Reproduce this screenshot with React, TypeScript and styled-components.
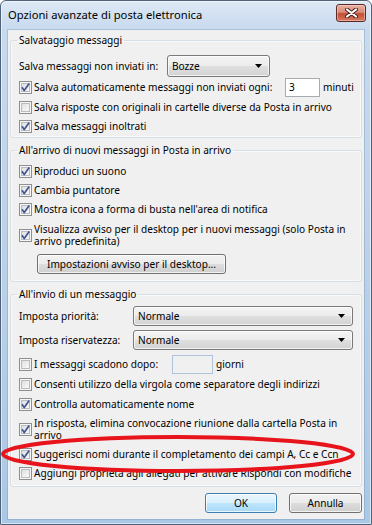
import React from 'react';
import styled, { createGlobalStyle } from 'styled-components';

const GlobalStyle = createGlobalStyle`
  html, body {
    margin: 0;
    padding: 0;
    background: #ffffff;
  }
  body {
    font-family: "Noto Sans", "Open Sans", sans-serif;
    font-size: 10.1px;
    color: #000;
  }
`;

function CheckMark() {
  return (
    <svg width="11" height="11" viewBox="0 0 11 11" style={{ display: 'block' }}>
      <path d="M2 5.3 L4.2 8.6 L9.2 1.6" fill="none" stroke="#3f558f" strokeWidth="1.7" strokeLinejoin="round" />
    </svg>
  );
}

function Check({ checked, w, children }: { checked?: boolean; w?: number; children: React.ReactNode }) {
  return (
    <CheckLabel $w={w}>
      <Box>{checked && <CheckMark />}</Box>
      <CheckText>{children}</CheckText>
    </CheckLabel>
  );
}

function Combo({ w, h, value }: { w?: number; h: number; value: string }) {
  return (
    <Select $w={w} $h={h}>
      <span>{value}</span>
      <svg width="7" height="4" viewBox="0 0 7 4">
        <path d="M0 0 H7 L3.5 4 Z" fill="#000" />
      </svg>
    </Select>
  );
}

export default function App() {
  return (
    <>
      <GlobalStyle />
      <Window>
        <TitleBar>
          <Title>Opzioni avanzate di posta elettronica</Title>
          <CloseButton>
            <svg width="13" height="10" viewBox="0 0 13 10">
              <path d="M2 1.5 L11 8.5 M11 1.5 L2 8.5" stroke="#4a1c16" strokeWidth="4" strokeLinecap="round" />
              <path d="M2 1.5 L11 8.5 M11 1.5 L2 8.5" stroke="#ffffff" strokeWidth="2.2" strokeLinecap="round" />
            </svg>
          </CloseButton>
        </TitleBar>

        <Content>
          <Group $mt={3} $pt={8} $pb={1}>
            <Legend>Salvataggio messaggi</Legend>
            <Row $h={22}>
              <FieldLabel $w={148}>Salva messaggi non inviati in:</FieldLabel>
              <Combo w={103} h={22} value="Bozze" />
            </Row>
            <Row $h={20}>
              <Check checked w={266}>Salva automaticamente messaggi non inviati ogni:</Check>
              <Field $w={35}>3</Field>
              <After>minuti</After>
            </Row>
            <Row $h={20}>
              <Check>Salva risposte con originali in cartelle diverse da Posta in arrivo</Check>
            </Row>
            <Row $h={19}>
              <Check checked>Salva messaggi inoltrati</Check>
            </Row>
          </Group>

          <Group $mt={5} $pt={5} $pb={7}>
            <Legend>All'arrivo di nuovi messaggi in Posta in arrivo</Legend>
            <Row $h={19}>
              <Check checked>Riproduci un suono</Check>
            </Row>
            <Row $h={19}>
              <Check checked>Cambia puntatore</Check>
            </Row>
            <Row $h={19}>
              <Check checked>Mostra icona a forma di busta nell'area di notifica</Check>
            </Row>
            <Row $h={26} $mt={3}>
              <Check checked>
                Visualizza avviso per il desktop per i nuovi messaggi (solo Posta in
                <br />
                arrivo predefinita)
              </Check>
            </Row>
            <Row $h={20} $mt={6}>
              <PushButton $w={189} style={{ marginLeft: 18 }}>Impostazioni avviso per il desktop...</PushButton>
            </Row>
          </Group>

          <Group $mt={5} $pt={5} $pb={3}>
            <Legend>All'invio di un messaggio</Legend>
            <Row $h={20}>
              <FieldLabel $w={114}>Imposta priorità:</FieldLabel>
              <Combo w={220} h={20} value="Normale" />
            </Row>
            <Row $h={20} $mt={4}>
              <FieldLabel $w={114}>Imposta riservatezza:</FieldLabel>
              <Combo w={220} h={20} value="Normale" />
            </Row>
            <Row $h={20} $mt={4}>
              <Check w={153}>I messaggi scadono dopo:</Check>
              <Field $w={41} $disabled />
              <After>giorni</After>
            </Row>
            <Row $h={20}>
              <Check>Consenti utilizzo della virgola come separatore degli indirizzi</Check>
            </Row>
            <Row $h={20}>
              <Check checked>Controlla automaticamente nome</Check>
            </Row>
            <Row $h={26} $mt={2}>
              <Check checked>
                In risposta, elimina convocazione riunione dalla cartella Posta in
                <br />
                arrivo
              </Check>
            </Row>
            <Row $h={19} $mt={3}>
              <Check checked>Suggerisci nomi durante il completamento dei campi A, Cc e Ccn</Check>
            </Row>
            <Row $h={19}>
              <Check>Aggiungi proprietà agli allegati per attivare Rispondi con modifiche</Check>
            </Row>
          </Group>

          <Footer>
            <PushButton $w={72} $primary>OK</PushButton>
            <PushButton $w={73}>Annulla</PushButton>
          </Footer>
        </Content>

        <Marker width="372" height="525" viewBox="0 0 372 525">
          <ellipse cx="178" cy="454" rx="175" ry="17" fill="none" stroke="#e8141c" strokeWidth="4" />
        </Marker>
      </Window>
    </>
  );
}

const Window = styled.div`
  position: relative;
  box-sizing: border-box;
  width: 372px;
  height: 525px;
  display: flex;
  flex-direction: column;
  border: 1px solid #4f6279;
  border-radius: 6px 6px 0 0;
  background: linear-gradient(to bottom, #dde8f5 0px, #c8daee 28px, #bfd3ea 200px, #a9c8e6 100%);
  box-shadow: inset 0 0 0 1px rgba(255, 255, 255, 0.55);
  overflow: hidden;
`;

const TitleBar = styled.div`
  height: 29px;
  flex: none;
  display: flex;
  align-items: flex-start;
  justify-content: space-between;
  padding: 0 5px 0 7px;
`;

const Title = styled.div`
  font-size: 11.2px;
  line-height: 28px;
  color: #000;
  white-space: nowrap;
`;

const CloseButton = styled.div`
  box-sizing: border-box;
  margin-top: 3px;
  width: 30px;
  height: 18px;
  display: flex;
  align-items: center;
  justify-content: center;
  border: 1px solid #5a2a24;
  border-radius: 3px;
  background: linear-gradient(to bottom, #eab1a4 0%, #d98b78 45%, #c24e36 55%, #d77a5f 100%);
  box-shadow: inset 0 0 0 1px rgba(255, 220, 210, 0.5);
`;

const Content = styled.div`
  flex: 1;
  margin: 0 7px 5px 7px;
  padding: 0 2px;
  background: #f0f0f0;
  display: flex;
  flex-direction: column;
  box-shadow: 0 0 0 1px rgba(110, 140, 175, 0.35);
`;

const Group = styled.fieldset<{ $mt: number; $pt: number; $pb: number }>`
  margin: ${(p) => p.$mt}px 0 0 0;
  padding: ${(p) => p.$pt}px 8px ${(p) => p.$pb}px 8px;
  border: 1px solid #d5dfe5;
  border-radius: 3px;
  min-width: 0;
  box-shadow: inset 0 0 0 1px rgba(255, 255, 255, 0.6);
`;

const Legend = styled.legend`
  padding: 0 2px;
  margin-left: -2px;
  line-height: 14px;
`;

const Row = styled.div<{ $h: number; $mt?: number }>`
  display: flex;
  align-items: center;
  height: ${(p) => p.$h}px;
  margin-top: ${(p) => p.$mt ?? 0}px;
  white-space: nowrap;
`;

const FieldLabel = styled.span<{ $w: number }>`
  width: ${(p) => p.$w}px;
  flex: none;
`;

const CheckLabel = styled.label<{ $w?: number }>`
  display: flex;
  align-items: center;
  gap: 2px;
  width: ${(p) => (p.$w ? `${p.$w}px` : 'auto')};
  flex: none;
`;

const Box = styled.span`
  box-sizing: border-box;
  flex: none;
  width: 13px;
  height: 13px;
  border: 1px solid #8e8f8f;
  background: linear-gradient(135deg, #d6d7d9 0%, #f1f1f1 60%, #fbfbfb 100%);
  box-shadow: inset 0 0 0 1px #f6f6f6, inset 0 0 0 2px #b9bcc1;
`;

const CheckText = styled.span`
  line-height: 12.5px;
`;

const Select = styled.div<{ $w?: number; $h: number }>`
  box-sizing: border-box;
  width: ${(p) => p.$w}px;
  height: ${(p) => p.$h}px;
  flex: none;
  display: flex;
  align-items: center;
  justify-content: space-between;
  padding: 0 7px 0 4px;
  border: 1px solid #7a7a7a;
  border-radius: 3px;
  background: linear-gradient(to bottom, #f4f4f4 0%, #ececec 50%, #dfdfdf 51%, #d3d3d3 100%);
  box-shadow: inset 0 0 0 1px rgba(255, 255, 255, 0.7);
`;

const Field = styled.div<{ $w: number; $disabled?: boolean }>`
  box-sizing: border-box;
  width: ${(p) => p.$w}px;
  height: 19px;
  flex: none;
  padding: 0 3px;
  line-height: 17px;
  border: 1px solid ${(p) => (p.$disabled ? '#afc4da' : '#a9abb0')};
  background: ${(p) => (p.$disabled ? '#f0f0f0' : '#ffffff')};
`;

const After = styled.span`
  margin-left: 3px;
`;

const PushButton = styled.button<{ $w: number; $primary?: boolean }>`
  box-sizing: border-box;
  width: ${(p) => p.$w}px;
  height: 20px;
  padding: 0;
  font: inherit;
  color: #000;
  border: 1px solid ${(p) => (p.$primary ? '#3c7fb1' : '#707070')};
  border-radius: 3px;
  background: ${(p) =>
    p.$primary
      ? 'linear-gradient(to bottom, #eaf6fd 0%, #d9f0fc 50%, #bee6fd 51%, #a7d9f5 100%)'
      : 'linear-gradient(to bottom, #f2f2f2 0%, #ebebeb 50%, #dddddd 51%, #cfcfcf 100%)'};
  box-shadow: inset 0 0 0 1px rgba(255, 255, 255, 0.75);
`;

const Footer = styled.div`
  display: flex;
  justify-content: flex-end;
  gap: 12px;
  margin-top: 6px;
`;

const Marker = styled.svg`
  position: absolute;
  left: -1px;
  top: -1px;
  pointer-events: none;
`;
